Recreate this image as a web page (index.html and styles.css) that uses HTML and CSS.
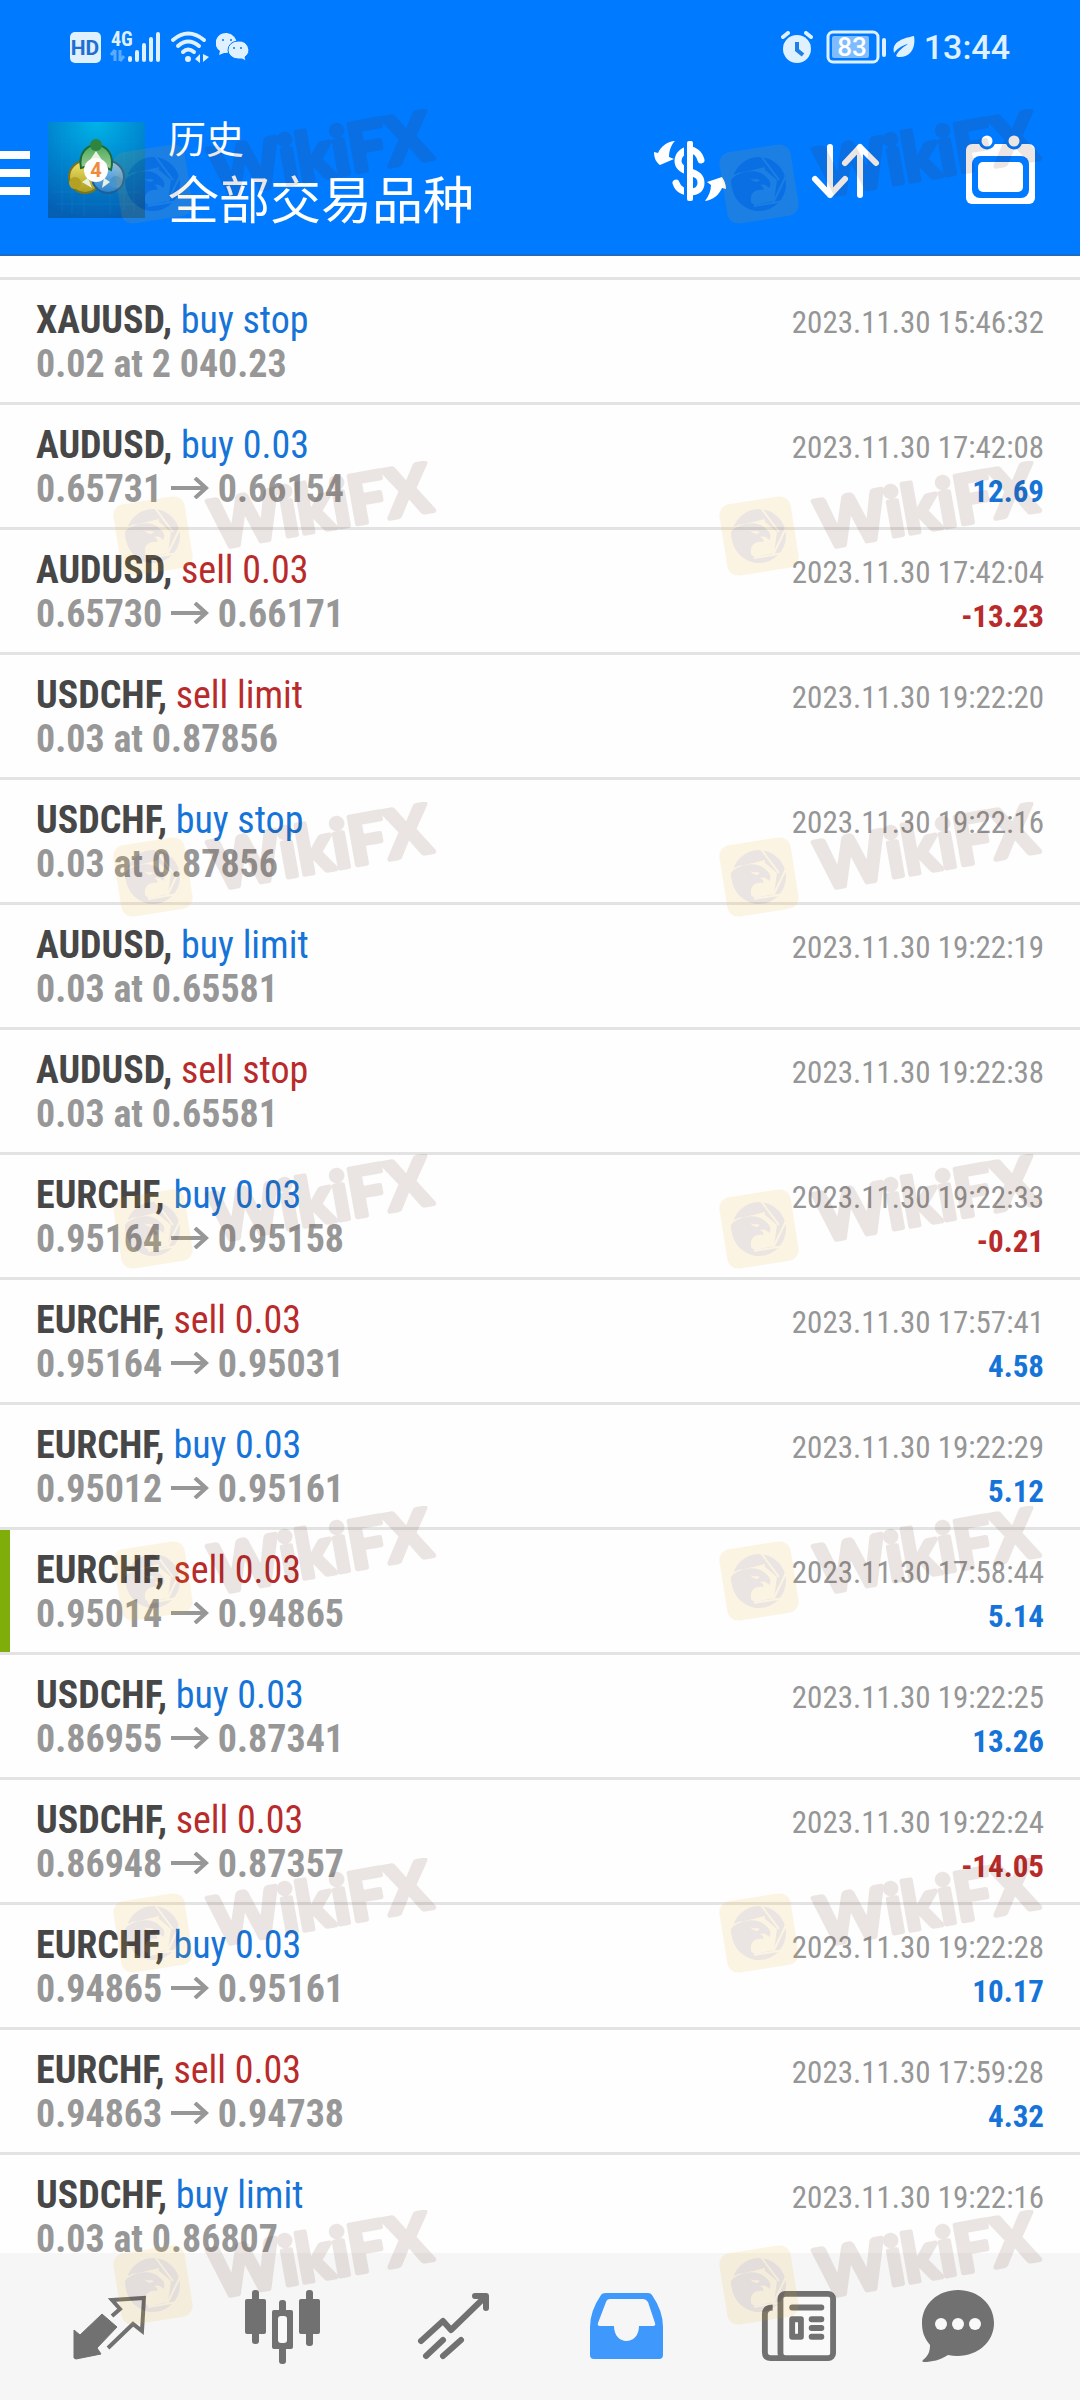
FILE: index.html
```
<!DOCTYPE html>
<html lang="zh-CN">
<head>
<meta charset="utf-8">
<meta name="viewport" content="width=device-width, initial-scale=1">
<title>历史</title>
<link rel="stylesheet" href="styles.css">
</head>
<body>
<svg class="defs" aria-hidden="true">
  <defs>
    <symbol id="arrow" viewBox="0 0 38 22">
      <path d="M0 11H35M24 1L35 11L24 21" fill="none" stroke="currentColor" stroke-width="4"/>
    </symbol>
    <symbol id="wikifx" viewBox="0 0 340 120" overflow="visible">
      <g opacity=".11">
        <rect x="5" y="39" width="72" height="72" rx="11" fill="#f5aa0a" transform="rotate(-9 41 75)"/>
        <g transform="translate(41 75)">
          <circle r="27" fill="#551e0a"/>
          <path d="M-22-11L5-15L18-4L15 17L-4 21L-16 14Z" fill="#f5aa0a"/>
          <path d="M2-28L20-4M-26-8L6-16M27-8L14 19M25 17L-5 22" stroke="#f5aa0a" stroke-width="2"/>
          <path d="M-28-4C-20-14 0-16 7-7C11-4 13 0 10 4C7 0 4 0 1 1C5 3 5 5 4 6C-3 5-9 9-8 16C-8 22-3 26 0 27C-4 27-8 26-10 24C-22 20-28 8-28-4Z" fill="#551e0a"/>
          <path d="M-9-6C-6-4-4-5-2-5L1-4C-2-1-6-2-9-6Z" fill="#f5aa0a"/>
        </g>
        <text x="103" y="88" class="mark-text" transform="rotate(-10 103 88)">WikiFX</text>
      </g>
    </symbol>
  </defs>
</svg>

<header class="header">
  <div class="status">
    <svg width="31" height="31" viewBox="0 0 31 31"><rect width="31" height="31" rx="5" fill="#dff0ff"/><text x="15" y="23" class="hd">HD</text></svg>
    <svg class="signal" width="50" height="32" viewBox="0 0 50 32">
      <text x="0" y="15" class="net">4G</text>
      <path d="M4 19V30M4 19L0 24M9 19V30M9 30L13 25" stroke="#5aabff" stroke-width="3" fill="none"/>
      <path d="M19 27V29M26 21V29M33 14V29M40 8V29M47 3V29" stroke="#dff0ff" stroke-width="4" stroke-linecap="round"/>
    </svg>
    <svg class="wifi" width="38" height="32" viewBox="0 0 38 32">
      <g fill="none" stroke="#dff0ff" stroke-width="4" stroke-linecap="round"><path d="M2 9Q17-4 33 9"/><path d="M7 15Q17 6 28 15"/><path d="M12 21Q17 16 23 21"/></g>
      <circle cx="17" cy="28" r="3" fill="#dff0ff"/><path d="M24 28L29 23V32ZM38 26L32 31V23Z" fill="#dff0ff"/>
    </svg>
    <svg width="33" height="28" viewBox="0 0 33 28">
      <path d="M11 0A11 10 0 0 0 4 18L3 22L8 20A11 10 0 1 0 11 0Z" fill="#dff0ff"/>
      <path d="M22 8A10 9 0 0 0 22 26L26 26L30 28L29 24A10 9 0 0 0 22 8Z" fill="#dff0ff" stroke="#007aff"/>
      <g fill="#007aff"><circle cx="7" cy="7" r="1"/><circle cx="15" cy="7" r="1"/><circle cx="18" cy="15" r="1"/><circle cx="25" cy="15" r="1"/></g>
    </svg>
    <svg class="push" width="32" height="32" viewBox="0 0 32 32">
      <circle cx="16" cy="18" r="14" fill="#dff0ff"/><path d="M2 6L7 2M30 6L25 2" stroke="#dff0ff" stroke-width="4" stroke-linecap="round"/><path d="M16 11V19L22 24" fill="none" stroke="#1f7fe6" stroke-width="4"/>
    </svg>
    <svg class="battery" width="60" height="34" viewBox="0 0 60 34">
      <rect x="2" y="2" width="50" height="30" rx="5" fill="none" stroke="#dff0ff" stroke-width="3"/><rect x="6" y="6" width="37" height="22" rx="2" fill="#7fbcff"/><path d="M58 10V25" stroke="#dff0ff" stroke-width="4" stroke-linecap="round"/>
      <text x="26" y="26" class="level">83</text>
    </svg>
    <svg class="leaf" width="22" height="24" viewBox="0 0 22 24">
      <path d="M21 1C23 12 18 23 5 22L3 21C5 16 9 13 15 9C9 10 3 15 1 18C-2 6 12 3 21 1Z" fill="#dff0ff"/>
    </svg>
    <time class="clock">13:44</time>
  </div>
  <div class="toolbar">
    <button class="menu" aria-label="菜单"><span></span><span></span><span></span></button>
    <svg class="logo" viewBox="0 0 97 96">
      <defs>
        <radialGradient id="sky" cx=".5" cy="0" r="1"><stop offset="0" stop-color="#00b4e8"/><stop offset=".5" stop-color="#0086cf"/><stop offset="1" stop-color="#0560b4"/></radialGradient>
        <linearGradient id="gr" x2="0" y2="1"><stop stop-color="#4aa85a"/><stop offset="1" stop-color="#a0d09a"/></linearGradient>
        <linearGradient id="ye" x2="0" y2="1"><stop stop-color="#f2e46a"/><stop offset="1" stop-color="#a89a1c"/></linearGradient>
        <linearGradient id="bl" x2="0" y2="1"><stop stop-color="#8cc8f4"/><stop offset="1" stop-color="#2a80c8"/></linearGradient>
      </defs>
      <rect width="97" height="96" fill="url(#sky)"/>
      <path d="M14 8V90M24 4V92M36 10V94M62 6V92M76 12V88M86 8V90M6 20H90M4 70H92M8 82H90" stroke="#1c9be0" opacity=".2"/>
      <circle cx="37" cy="55" r="16" fill="url(#ye)" stroke="#7a7420" stroke-width="2"/>
      <circle cx="60" cy="55" r="16" fill="url(#bl)" stroke="#1f5f98" stroke-width="2"/>
      <path d="M33 46C30 30 40 23 48 23C58 23 67 32 63 48L56 44L40 44Z" fill="url(#gr)" stroke="#1f6a34" stroke-width="2"/>
      <path d="M48 29L42 38H54ZM34 60L44 66L40 56ZM62 60L54 66L56 56Z" fill="#e8f2e0"/>
      <circle cx="48" cy="23" r="6" fill="#2f8440"/><circle cx="27" cy="61" r="6" fill="#b4a022"/><circle cx="68" cy="60" r="6" fill="#4a94cc"/>
      <circle cx="48" cy="48" r="12" fill="#fff"/>
      <text x="48" y="55" class="four">4</text>
    </svg>
    <div class="titles"><h1>历史</h1><p>全部交易品种</p></div>
    <div class="tools">
      <button aria-label="货币"><svg viewBox="0 0 76 76">
        <path d="M49 28C47 21 42 18 38 18C31 18 26 23 26 29C26 35 31 38 38 40C46 42 49 45 49 51C49 57 45 60 38 60C30 60 26 57 24 51" fill="none" stroke="#fff" stroke-width="7" stroke-linecap="round"/>
        <path d="M32 9H35V69H32Z" fill="#007aff"/><rect x="35" y="9" width="6" height="60" rx="2" fill="#fff"/>
        <path d="M2 20L6 21C9 14 16 9 23 9C19 13 17 19 17 25L22 27L8 33C5 31 2 27 2 20ZM74 57L70 56C67 63 61 68 53 69C57 64 59 58 59 53L55 50L70 45C72 48 74 52 74 57Z" fill="#fff"/>
      </svg></button>
      <button aria-label="排序"><svg viewBox="0 0 76 76"><path d="M23 15V63M8 47L23 63L38 47M53 63V15M38 31L53 15L69 31" fill="none" stroke="#fff" stroke-width="6" stroke-linecap="round" stroke-linejoin="round"/></svg></button>
      <button aria-label="日期"><svg viewBox="0 0 76 76">
        <rect x="4" y="12" width="69" height="60" rx="6" fill="#fff"/><rect x="10" y="24" width="57" height="42" rx="8" fill="#007aff"/><rect x="16" y="30" width="45" height="30" rx="5" fill="#fff"/>
        <g fill="#fff" stroke="#007aff" stroke-width="3"><circle cx="25" cy="9" r="7"/><circle cx="52" cy="9" r="7"/></g>
      </svg></button>
    </div>
  </div>
</header>

<main class="history">
  <ul class="deals">
    <li><p><b>XAUUSD,</b> <span class="buy">buy stop</span></p><time>2023.11.30 15:46:32</time><p class="price">0.02 at 2 040.23</p></li>
    <li><p><b>AUDUSD,</b> <span class="buy">buy 0.03</span></p><time>2023.11.30 17:42:08</time><p class="price">0.65731 <svg><use href="#arrow"/></svg> 0.66154</p><b class="sum buy">12.69</b></li>
    <li><p><b>AUDUSD,</b> <span class="sell">sell 0.03</span></p><time>2023.11.30 17:42:04</time><p class="price">0.65730 <svg><use href="#arrow"/></svg> 0.66171</p><b class="sum sell">-13.23</b></li>
    <li><p><b>USDCHF,</b> <span class="sell">sell limit</span></p><time>2023.11.30 19:22:20</time><p class="price">0.03 at 0.87856</p></li>
    <li><p><b>USDCHF,</b> <span class="buy">buy stop</span></p><time>2023.11.30 19:22:16</time><p class="price">0.03 at 0.87856</p></li>
    <li><p><b>AUDUSD,</b> <span class="buy">buy limit</span></p><time>2023.11.30 19:22:19</time><p class="price">0.03 at 0.65581</p></li>
    <li><p><b>AUDUSD,</b> <span class="sell">sell stop</span></p><time>2023.11.30 19:22:38</time><p class="price">0.03 at 0.65581</p></li>
    <li><p><b>EURCHF,</b> <span class="buy">buy 0.03</span></p><time>2023.11.30 19:22:33</time><p class="price">0.95164 <svg><use href="#arrow"/></svg> 0.95158</p><b class="sum sell">-0.21</b></li>
    <li><p><b>EURCHF,</b> <span class="sell">sell 0.03</span></p><time>2023.11.30 17:57:41</time><p class="price">0.95164 <svg><use href="#arrow"/></svg> 0.95031</p><b class="sum buy">4.58</b></li>
    <li><p><b>EURCHF,</b> <span class="buy">buy 0.03</span></p><time>2023.11.30 19:22:29</time><p class="price">0.95012 <svg><use href="#arrow"/></svg> 0.95161</p><b class="sum buy">5.12</b></li>
    <li class="marked"><p><b>EURCHF,</b> <span class="sell">sell 0.03</span></p><time>2023.11.30 17:58:44</time><p class="price">0.95014 <svg><use href="#arrow"/></svg> 0.94865</p><b class="sum buy">5.14</b></li>
    <li><p><b>USDCHF,</b> <span class="buy">buy 0.03</span></p><time>2023.11.30 19:22:25</time><p class="price">0.86955 <svg><use href="#arrow"/></svg> 0.87341</p><b class="sum buy">13.26</b></li>
    <li><p><b>USDCHF,</b> <span class="sell">sell 0.03</span></p><time>2023.11.30 19:22:24</time><p class="price">0.86948 <svg><use href="#arrow"/></svg> 0.87357</p><b class="sum sell">-14.05</b></li>
    <li><p><b>EURCHF,</b> <span class="buy">buy 0.03</span></p><time>2023.11.30 19:22:28</time><p class="price">0.94865 <svg><use href="#arrow"/></svg> 0.95161</p><b class="sum buy">10.17</b></li>
    <li><p><b>EURCHF,</b> <span class="sell">sell 0.03</span></p><time>2023.11.30 17:59:28</time><p class="price">0.94863 <svg><use href="#arrow"/></svg> 0.94738</p><b class="sum buy">4.32</b></li>
    <li><p><b>USDCHF,</b> <span class="buy">buy limit</span></p><time>2023.11.30 19:22:16</time><p class="price">0.03 at 0.86807</p></li>
  </ul>
</main>

<nav class="tabs">
  <button aria-label="行情"><svg viewBox="0 0 76 76">
    <path d="M2 41L8 46L30 25L45 38L25 59L29 65L4 70L2 69Z" fill="currentColor" stroke="currentColor" stroke-linejoin="round"/>
    <path d="M36 59L61 35L70 42L72 9L40 11L48 20L40 27" fill="none" stroke="currentColor" stroke-width="4"/>
  </svg></button>
  <button aria-label="图表"><svg viewBox="0 0 76 76">
    <g fill="currentColor"><rect x="1" y="10" width="21" height="35" rx="2"/><rect x="8" y="1" width="7" height="54" rx="3"/><rect x="55" y="10" width="21" height="35" rx="2"/><rect x="62" y="1" width="7" height="56" rx="3"/><rect x="28" y="21" width="21" height="39" rx="2"/><rect x="35" y="11" width="7" height="64" rx="3"/></g>
    <rect x="34" y="27" width="9" height="27" rx="3" fill="#f9f9f9"/>
  </svg></button>
  <button aria-label="交易"><svg viewBox="0 0 76 76">
    <path d="M5 52L27 32L35 41L69 8M59 7H70V19M10 67L27 51M27 67L45 51" fill="none" stroke="currentColor" stroke-width="6" stroke-linecap="round" stroke-linejoin="round"/>
  </svg></button>
  <button class="active" aria-label="历史"><svg viewBox="0 0 76 76">
    <path fill-rule="evenodd" d="M18 4H60Q63 4 64 6Q75 22 75 38V66Q75 70 71 70H6Q2 70 2 66V38Q2 22 13 6Q14 4 18 4ZM22 10Q19 10 18 13L10 34Q9 37 12 37H26C26 57 51 57 51 37H65Q68 37 67 34L60 13Q58 10 55 10Z" fill="currentColor"/>
  </svg></button>
  <button aria-label="新闻"><svg viewBox="0 0 78 76">
    <path d="M13 18Q5 18 5 25V64Q5 70 11 70H28" fill="none" stroke="currentColor" stroke-width="6"/>
    <rect x="21" y="4" width="54" height="66" rx="5" fill="#fafafa" stroke="currentColor" stroke-width="6"/>
    <path d="M33 18H63M53 30H63M53 39H63M53 48H63" stroke="currentColor" stroke-width="6" stroke-linecap="round"/>
    <rect x="33" y="30" width="9" height="18" fill="none" stroke="currentColor" stroke-width="6" stroke-linejoin="round"/>
  </svg></button>
  <button aria-label="消息"><svg viewBox="0 0 76 76">
    <path d="M38 1C58 1 74 15 74 34C74 55 54 71 28 66C20 71 12 73 4 73C2 73 2 72 3 71C8 67 10 63 10 56C4 49 2 42 2 34C2 15 18 1 38 1Z" fill="currentColor"/>
    <g fill="#f9f9f9"><circle cx="21" cy="35" r="6"/><circle cx="38" cy="35" r="6"/><circle cx="55" cy="35" r="6"/></g>
  </svg></button>
</nav>

<div class="watermarks" aria-hidden="true">
  <svg><use href="#wikifx"/></svg><svg><use href="#wikifx"/></svg>
  <svg><use href="#wikifx"/></svg><svg><use href="#wikifx"/></svg>
  <svg><use href="#wikifx"/></svg><svg><use href="#wikifx"/></svg>
  <svg><use href="#wikifx"/></svg><svg><use href="#wikifx"/></svg>
  <svg><use href="#wikifx"/></svg><svg><use href="#wikifx"/></svg>
  <svg><use href="#wikifx"/></svg><svg><use href="#wikifx"/></svg>
  <svg><use href="#wikifx"/></svg><svg><use href="#wikifx"/></svg>
</div>
</body>
</html>
```
FILE: styles.css
```
* { box-sizing: border-box; margin: 0; padding: 0; }

body {
  position: relative;
  display: flex;
  flex-direction: column;
  height: 100vh;
  overflow: hidden;
  background: #fefefe;
  font-family: "Roboto Condensed", Roboto, "Noto Sans CJK SC", sans-serif;
}

svg { display: block; flex: none; }
button { background: none; border: 0; color: inherit; cursor: pointer; }
.defs { position: absolute; width: 0; height: 0; }

/* Header */
.header { flex: none; background: #007aff; border-bottom: 2px solid #1c6cc4; color: #fff; }

.status {
  display: flex;
  align-items: center;
  height: 94px;
  padding: 0 70px;
  color: #dff0ff;
}
.signal, .wifi { margin-left: 10px; overflow: visible; }
.wifi { margin-right: 7px; }
.push { margin-left: auto; }
.battery { margin-left: 13px; }
.leaf { margin: 0 9px 0 7px; }
.clock { font: 500 34px/40px Roboto, sans-serif; }
.hd { font: bold 21px Roboto, sans-serif; fill: #1f6fd0; text-anchor: middle; }
.net { font: bold 20px "Roboto Condensed", sans-serif; fill: #dff0ff; }
.level { font: 500 26px Roboto, sans-serif; fill: #fff; text-anchor: middle; }

.toolbar {
  display: flex;
  align-items: center;
  height: 160px;
  padding: 0 42px 8px 0;
}
.menu { display: grid; gap: 10px; width: 30px; padding-top: 6px; }
.menu span { height: 8px; background: #fff; }
.logo { width: 97px; height: 96px; margin-left: 18px; }
.four { font: bold 20px Roboto, sans-serif; fill: #f08a3c; text-anchor: middle; }
.titles { margin-left: 23px; padding-bottom: 4px; font-family: "Noto Sans CJK SC", sans-serif; }
.titles h1 { font-size: 38px; line-height: 58px; font-weight: 400; }
.titles p { font-size: 51px; line-height: 62px; }
.tools { display: flex; gap: 79px; margin-left: auto; }
.tools svg { width: 76px; height: 76px; }

/* Deals */
.history { flex: 1; min-height: 0; overflow: hidden; padding-top: 21px; }
.deals { list-style: none; font-size: 38px; line-height: 44px; color: #474747; }
.deals li {
  display: grid;
  grid-template-columns: 1fr auto;
  grid-auto-rows: 44px;
  align-items: baseline;
  height: 125px;
  padding: 18px 36px 0;
  border-top: 3px solid #e3e3e3;
}
.deals .marked { box-shadow: inset 10px 0 #7fae0a; }
.deals time { font-size: 31px; color: #969696; }
.price { font-weight: 700; color: #979797; }
.price svg { display: inline-block; width: 38px; height: 22px; vertical-align: 3px; }
.sum { font-size: 31px; text-align: right; }
.deals .buy { color: #1674d8; }
.deals .sell { color: #b92b2b; }

/* Bottom tabs */
.tabs {
  flex: none;
  display: grid;
  grid-template-columns: repeat(5, 172fr) 148fr;
  align-items: center;
  height: 147px;
  padding: 0 48px 0 24px;
  background: #f6f6f6;
  color: #717171;
}
.tabs button { display: grid; justify-content: center; }
.tabs svg { width: 76px; height: 76px; }
.tabs .active { color: #3f98fb; }

/* Watermark layer */
.watermarks {
  position: absolute;
  inset: 0;
  display: grid;
  grid-template-columns: 606px 340px;
  grid-template-rows: 352px 341px;
  grid-auto-rows: 352px;
  padding: 109px 0 0 112px;
  overflow: hidden;
  pointer-events: none;
}
.watermarks svg { width: 340px; height: 120px; }
.mark-text {
  font: bold 67px Lato, sans-serif;
  fill: #551e0a;
  stroke: #551e0a;
  stroke-width: 5px;
  stroke-linejoin: round;
}
```
